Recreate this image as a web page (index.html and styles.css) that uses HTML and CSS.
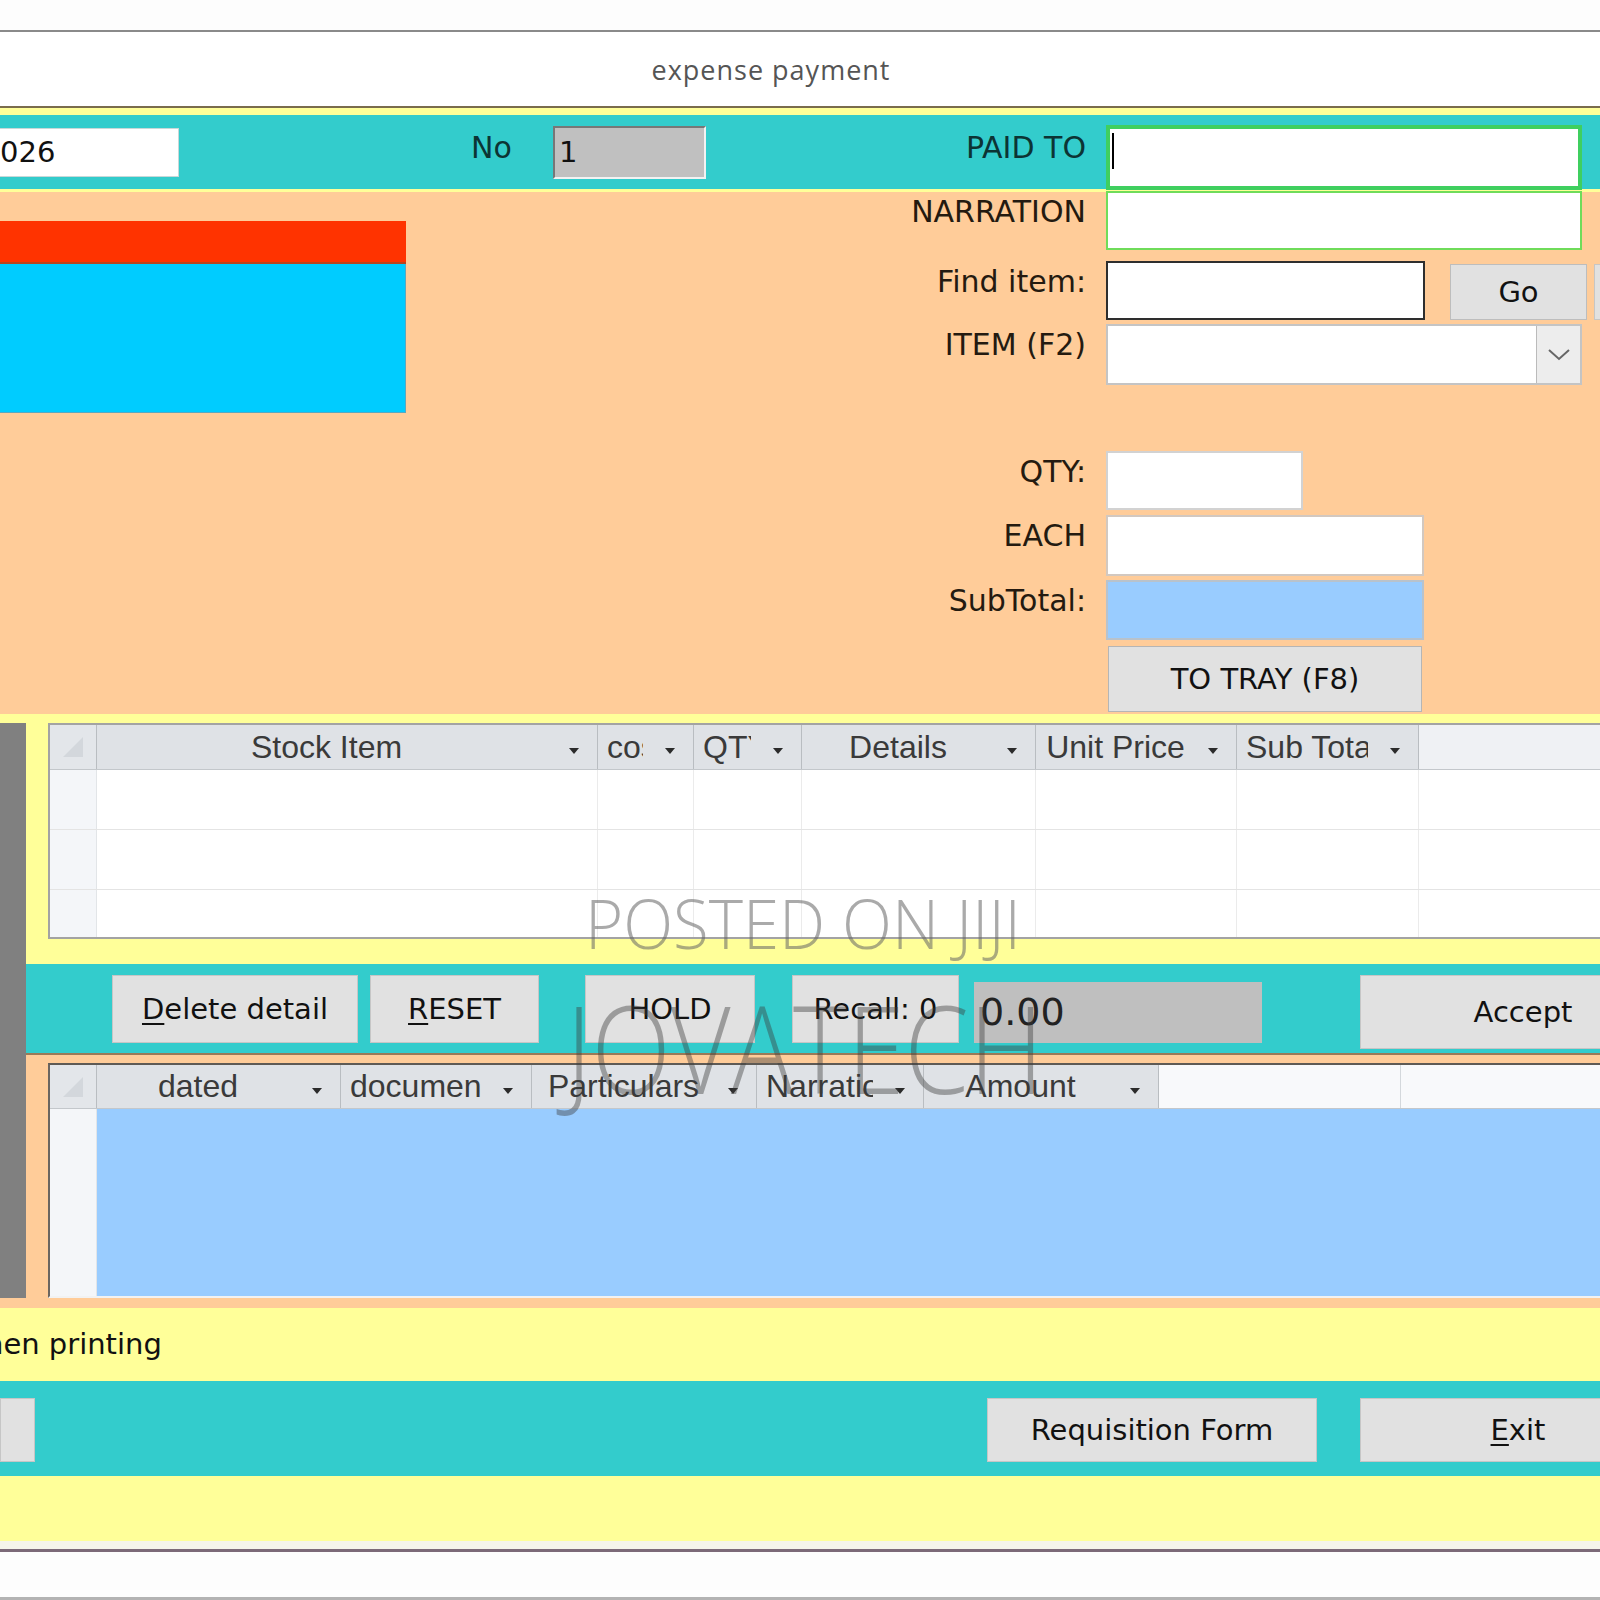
FILE: index.html
```html
<!DOCTYPE html>
<html lang="en">
<head>
    <meta charset="UTF-8">
    <meta name="viewport" content="width=device-width, initial-scale=1.0">
    <title>expense payment</title>
    <link rel="stylesheet" href="styles.css">
</head>
<body>
<div class="screen">
    <div class="window">
        <div class="caption">expense payment</div>
        <div class="form">
            <div class="head-band">
                <div class="field date-field">026</div>
                <span class="lbl no-lbl">No</span>
                <div class="field sunken">1</div>
                <span class="lbl paid-lbl">PAID TO</span>
                <div class="field paid-field"><span class="caret"></span></div>
            </div>

            <div class="entry">
                <div class="status-block">
                    <div class="status-red"></div>
                    <div class="status-cyan"></div>
                </div>
                <div class="entry-form">
                    <div class="row row-narr">
                        <label>NARRATION</label>
                        <div class="field narr-field"></div>
                    </div>
                    <div class="row row-find">
                        <label>Find item:</label>
                        <div class="field find-field"></div>
                        <button class="btn go-btn">Go</button>
                        <button class="btn go-next"></button>
                    </div>
                    <div class="row row-item">
                        <label>ITEM (F2)</label>
                        <div class="field combo">
                            <span class="combo-btn">
                                <svg width="22" height="12" viewBox="0 0 22 12"><polyline points="1,1 11,10 21,1" fill="none" stroke="#666" stroke-width="2"/></svg>
                            </span>
                        </div>
                    </div>
                    <div class="row row-qty">
                        <label>QTY:</label>
                        <div class="field qty-field"></div>
                    </div>
                    <div class="row row-each">
                        <label>EACH</label>
                        <div class="field each-field"></div>
                    </div>
                    <div class="row row-sub">
                        <label>SubTotal:</label>
                        <div class="field sub-field"></div>
                    </div>
                    <div class="row row-tray">
                        <span class="spacer"></span>
                        <button class="btn tray-btn">TO TRAY (F8)</button>
                    </div>
                </div>
            </div>

            <div class="lower">
                <div class="side">
                    <div class="side-top"></div>
                    <div class="side-bar"></div>
                    <div class="side-bottom"></div>
                </div>
                <div class="lower-main">
                    <!-- items in the tray -->
                    <div class="tray">
                        <div class="grid-frame stock-frame">
                            <div class="grid-head cols-stock">
                                <div class="hcell sel"><svg width="24" height="24" viewBox="0 0 24 24"><polygon points="2,22 22,2 22,22" fill="#d3d7dc"/></svg></div>
                                <div class="hcell"><span class="txt">Stock Item</span><span class="arrow"><svg width="10" height="6"><path d="M0 0h10L5 6z" fill="#2b2b2b"/></svg></span></div>
                                <div class="hcell"><span class="txt">cost</span><span class="arrow"><svg width="10" height="6"><path d="M0 0h10L5 6z" fill="#2b2b2b"/></svg></span></div>
                                <div class="hcell"><span class="txt">QTY</span><span class="arrow"><svg width="10" height="6"><path d="M0 0h10L5 6z" fill="#2b2b2b"/></svg></span></div>
                                <div class="hcell"><span class="txt">Details</span><span class="arrow"><svg width="10" height="6"><path d="M0 0h10L5 6z" fill="#2b2b2b"/></svg></span></div>
                                <div class="hcell"><span class="txt">Unit Price</span><span class="arrow"><svg width="10" height="6"><path d="M0 0h10L5 6z" fill="#2b2b2b"/></svg></span></div>
                                <div class="hcell"><span class="txt">Sub Total</span><span class="arrow"><svg width="10" height="6"><path d="M0 0h10L5 6z" fill="#2b2b2b"/></svg></span></div>
                                <div class="hcell filler"></div>
                            </div>
                            <div class="grow cols-stock">
                                <div class="gcell sel"></div><div class="gcell"></div><div class="gcell"></div><div class="gcell"></div><div class="gcell"></div><div class="gcell"></div><div class="gcell"></div><div class="gcell"></div>
                            </div>
                            <div class="grow cols-stock">
                                <div class="gcell sel"></div><div class="gcell"></div><div class="gcell"></div><div class="gcell"></div><div class="gcell"></div><div class="gcell"></div><div class="gcell"></div><div class="gcell"></div>
                            </div>
                            <div class="grow cols-stock">
                                <div class="gcell sel"></div><div class="gcell"></div><div class="gcell"></div><div class="gcell"></div><div class="gcell"></div><div class="gcell"></div><div class="gcell"></div><div class="gcell"></div>
                            </div>
                        </div>
                    </div>

                    <div class="actions">
                        <button class="btn del-btn"><u>D</u>elete detail</button>
                        <button class="btn reset-btn"><u>R</u>ESET</button>
                        <button class="btn hold-btn">HOLD</button>
                        <button class="btn recall-btn">Recall: 0</button>
                        <div class="total-field">0.00</div>
                        <button class="btn accept-btn">Accept</button>
                    </div>

                    <!-- journal lines -->
                    <div class="journal">
                        <div class="grid-frame journal-frame">
                            <div class="grid-head cols-journal">
                                <div class="hcell sel"><svg width="24" height="24" viewBox="0 0 24 24"><polygon points="2,22 22,2 22,22" fill="#d3d7dc"/></svg></div>
                                <div class="hcell"><span class="txt">dated</span><span class="arrow"><svg width="10" height="6"><path d="M0 0h10L5 6z" fill="#2b2b2b"/></svg></span></div>
                                <div class="hcell"><span class="txt">document</span><span class="arrow"><svg width="10" height="6"><path d="M0 0h10L5 6z" fill="#2b2b2b"/></svg></span></div>
                                <div class="hcell"><span class="txt">Particulars</span><span class="arrow"><svg width="10" height="6"><path d="M0 0h10L5 6z" fill="#2b2b2b"/></svg></span></div>
                                <div class="hcell"><span class="txt">Narration</span><span class="arrow"><svg width="10" height="6"><path d="M0 0h10L5 6z" fill="#2b2b2b"/></svg></span></div>
                                <div class="hcell"><span class="txt">Amount</span><span class="arrow"><svg width="10" height="6"><path d="M0 0h10L5 6z" fill="#2b2b2b"/></svg></span></div>
                                <div class="hcell blank"></div>
                                <div class="hcell blank"></div>
                            </div>
                            <div class="jbody cols-journal">
                                <div class="gcell sel"></div>
                                <div class="jfill"></div>
                            </div>
                        </div>
                    </div>
                </div>
            </div>

            <div class="note"><span>hen printing</span></div>

            <div class="footer-bar">
                <button class="btn edge-btn"></button>
                <button class="btn req-btn">Requisition Form</button>
                <button class="btn exit-btn"><u>E</u>xit</button>
            </div>
            <div class="footer-gap"></div>
        </div>
        <div class="window-foot"></div>
    </div>

    <div class="wm wm-posted">POSTED ON JIJI</div>
    <div class="wm wm-jova">JOVATECH</div>
</div>
</body>
</html>
```

FILE: styles.css
```css
* {
    box-sizing: border-box;
}
html, body {
    margin: 0;
    padding: 0;
    overflow: hidden;
    background-color: #fff;
}
body {
    font-family: "DejaVu Sans", "Noto Sans", sans-serif;
    color: #111;
}
.screen {
    position: relative;
    width: 1600px;
    height: 1600px;
    overflow: hidden;
    padding-top: 30px;
    background-color: #fdfdfd;
    border-bottom: 3px solid #b3b3b3;
}
.window {
    border-top: 2px solid #8a8a8a;
}
.caption {
    height: 76px;
    display: flex;
    align-items: center;
    justify-content: center;
    padding-right: 58px;
    background-color: #fff;
    border-bottom: 2px solid #7a6c4c;
    font-family: "Open Sans", sans-serif;
    font-size: 27px;
    letter-spacing: 1px;
    color: #555;
}
.form {
    background-color: #ffff99;
    padding-top: 7px;
}

/* teal header band */
.head-band {
    height: 74px;
    display: flex;
    align-items: center;
    background-color: #33cccc;
}
.field {
    background-color: #fff;
    flex-shrink: 0;
}
.lbl {
    font-size: 30px;
    line-height: 36px;
    margin-bottom: 8px;
    flex-shrink: 0;
}
.date-field {
    width: 179px;
    height: 49px;
    border: 1px solid #c8d8d8;
    border-left: 0;
    font-size: 29px;
    line-height: 46px;
}
.no-lbl {
    margin-left: 292px;
    width: 82px;
    color: #0c3434;
}
.sunken {
    width: 153px;
    height: 53px;
    background-color: #c0c0c0;
    border: 2px solid #f2f2f2;
    border-top-color: #777;
    border-left-color: #777;
    font-size: 29px;
    line-height: 48px;
    padding-left: 4px;
}
.paid-lbl {
    width: 380px;
    margin-right: 20px;
    text-align: right;
    color: #0c3434;
}
.paid-field {
    width: 476px;
    height: 65px;
    align-self: flex-end;
    margin-bottom: -1px;
    border: 4px solid #3fcf5f;
    padding: 4px 0 0 2px;
}
.caret {
    display: block;
    width: 2px;
    height: 36px;
    background-color: #000;
}

/* orange entry area */
.entry {
    display: flex;
    height: 522px;
    margin-top: 3px;
    background-color: #ffcc99;
}
.status-block {
    width: 406px;
    margin-top: 29px;
    flex-shrink: 0;
}
.status-red {
    height: 43px;
    background-color: #ff3300;
    border-bottom: 2px solid #b8451f;
}
.status-cyan {
    height: 149px;
    background-color: #00ccff;
    border-right: 1px solid #5aa8c0;
    border-bottom: 1px solid #5aa8c0;
}
.entry-form {
    margin-left: 474px;
    display: flex;
    flex-direction: column;
}
.row {
    display: flex;
    align-items: flex-start;
}
.row label, .row .spacer {
    width: 206px;
    margin-right: 20px;
    text-align: right;
    font-size: 30px;
    line-height: 42px;
    color: #241a10;
    flex-shrink: 0;
}
.row-narr { margin-top: -1px; }
.row-find { margin-top: 11px; }
.row-item { margin-top: 4px; }
.row-qty { margin-top: 66px; }
.row-each { margin-top: 5px; }
.row-sub { margin-top: 4px; }
.row-tray { margin-top: 6px; }

.narr-field {
    width: 476px;
    height: 59px;
    border: 2px solid #6fdc5a;
}
.find-field {
    width: 319px;
    height: 59px;
    border: 2px solid #2e2e2e;
}
.combo {
    width: 476px;
    height: 61px;
    border: 2px solid #c4c4c4;
    display: flex;
    justify-content: flex-end;
}
.combo-btn {
    width: 44px;
    display: flex;
    align-items: center;
    justify-content: center;
    background-color: #ededed;
    border-left: 1px solid #bbb;
}
.qty-field {
    width: 197px;
    height: 59px;
    border: 2px solid #d2d2d2;
}
.each-field {
    width: 318px;
    height: 61px;
    border: 2px solid #d2c8c0;
}
.sub-field {
    width: 318px;
    height: 60px;
    border: 2px solid #b8c2cc;
    background-color: #99ccff;
}

/* buttons */
.btn {
    padding: 0;
    margin: 0;
    background-color: #e1e1e1;
    border: 1px solid #c6c6c6;
    font-family: "DejaVu Sans", "Noto Sans", sans-serif;
    font-size: 29px;
    color: #111;
    flex-shrink: 0;
}
.btn u {
    text-underline-offset: 4px;
}
.go-btn {
    margin-top: 3px;
    margin-left: 25px;
    width: 137px;
    height: 56px;
    border-color: #bdbdbd;
}
.go-next {
    margin-top: 3px;
    margin-left: 7px;
    width: 80px;
    height: 56px;
}
.tray-btn {
    margin-left: 2px;
    width: 314px;
    height: 66px;
    border-color: #b5b5b5;
}

/* lower part with the two datasheets */
.lower {
    display: flex;
}
.side {
    width: 26px;
    flex-shrink: 0;
    display: flex;
    flex-direction: column;
}
.side-top {
    height: 9px;
}
.side-bar {
    flex: 1;
    background-color: #808080;
}
.side-bottom {
    height: 10px;
    background-color: #ffcc99;
}
.lower-main {
    flex: 1;
    min-width: 0;
}
.tray {
    padding: 9px 0 25px 22px;
}
.grid-frame {
    width: 1580px;
    overflow: hidden;
    background-color: #fff;
    border: 2px solid #a3a3a3;
    border-right: 0;
}
.stock-frame {
    height: 216px;
}
.journal-frame {
    height: 235px;
    border-top-color: #5e5a55;
    border-left-color: #6b6560;
    border-bottom-color: #f2f2f2;
}
.cols-stock {
    display: grid;
    grid-template-columns: 47px 501px 96px 108px 234px 201px 182px 1fr;
}
.cols-journal {
    display: grid;
    grid-template-columns: 47px 244px 191px 225px 167px 235px 242px 1fr;
}
.grid-head {
    height: 45px;
    border-bottom: 1px solid #c3c7cb;
}
.journal-frame .grid-head {
    height: 44px;
}
.hcell {
    display: flex;
    align-items: center;
    min-width: 0;
    background-color: #dfe2e6;
    border-right: 1px solid #b9bdc1;
    font-family: "Liberation Sans", Arial, sans-serif;
    font-size: 32px;
    color: #3a3a3a;
}
.hcell .txt {
    flex: 1;
    min-width: 0;
    overflow: hidden;
    white-space: nowrap;
    text-align: center;
    padding-left: 9px;
}
.hcell .arrow {
    width: 50px;
    flex-shrink: 0;
    display: flex;
    justify-content: center;
    padding-top: 8px;
    padding-left: 4px;
}
.hcell.sel {
    justify-content: center;
    background-color: #e3e6ea;
}
.hcell.filler {
    background-color: #eff1f4;
    border-right: 0;
}
.hcell.blank {
    background-color: #f8f9fb;
    border-right: 1px solid #d4d8dc;
}
.grow {
    height: 60px;
    border-bottom: 1px solid #e4e4e4;
}
.grow:last-child {
    height: 47px;
    border-bottom: 0;
}
.gcell {
    border-right: 1px solid #ebebeb;
}
.gcell.sel {
    background-color: #f4f6f9;
    border-right-color: #e2e5e8;
}

.actions {
    height: 89px;
    display: flex;
    align-items: flex-start;
    padding-top: 11px;
    background-color: #33cccc;
}
.actions .btn {
    height: 68px;
}
.del-btn { margin-left: 86px; width: 246px; }
.reset-btn { margin-left: 12px; width: 169px; }
.hold-btn { margin-left: 46px; width: 170px; }
.recall-btn { margin-left: 37px; width: 167px; }
.total-field {
    margin-left: 15px;
    margin-top: 7px;
    width: 288px;
    height: 61px;
    flex-shrink: 0;
    padding-left: 6px;
    background-color: #bfbfbf;
    font-size: 38px;
    line-height: 60px;
    color: #222;
}
.actions .accept-btn {
    margin-left: 98px;
    width: 326px;
    height: 74px;
}

.journal {
    padding: 8px 0 10px 22px;
    background-color: #ffcc99;
    border-top: 2px solid #9a7a58;
}
.jbody {
    height: 187px;
}
.jfill {
    grid-column: 2 / -1;
    background-color: #99ccff;
}

/* bottom */
.note {
    height: 73px;
    display: flex;
    align-items: center;
    overflow: hidden;
    font-size: 29px;
}
.note span {
    margin-left: -15px;
    padding-bottom: 2px;
}
.footer-bar {
    height: 95px;
    display: flex;
    align-items: flex-start;
    padding-top: 17px;
    background-color: #33cccc;
}
.footer-bar .btn {
    height: 64px;
}
.edge-btn { width: 35px; }
.req-btn { margin-left: 952px; width: 330px; }
.exit-btn { margin-left: 43px; width: 316px; }
.footer-gap {
    height: 65px;
}
.window-foot {
    height: 11px;
    background-color: #f5f4ea;
    border-bottom: 3px solid #7c6a78;
}

/* watermark lying over the screenshot */
.wm {
    position: absolute;
    font-family: "Open Sans", sans-serif;
    font-weight: 300;
    line-height: 1;
    white-space: nowrap;
    transform-origin: left top;
    pointer-events: none;
}
.wm-posted {
    left: 585px;
    top: 889px;
    font-size: 68px;
    transform: scaleX(0.96);
    color: rgba(100, 100, 100, 0.55);
}
.wm-jova {
    left: 566px;
    top: 986px;
    font-size: 122px;
    transform: scaleX(0.85);
    color: rgba(60, 60, 60, 0.42);
}
```
